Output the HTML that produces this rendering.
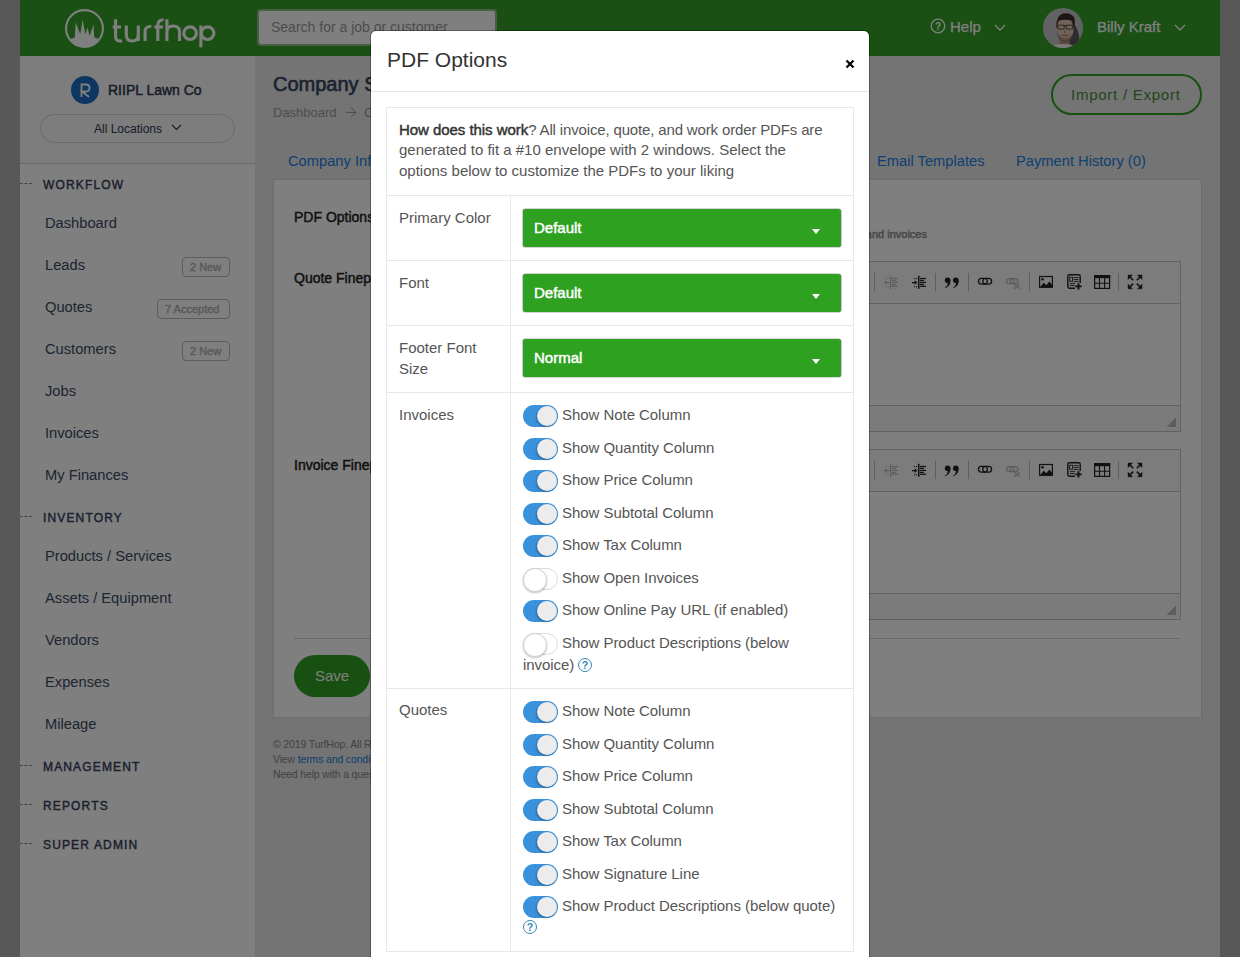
<!DOCTYPE html>
<html><head><meta charset="utf-8">
<style>
*{box-sizing:border-box;margin:0;padding:0}
html,body{width:1240px;height:957px;overflow:hidden}
body{position:relative;background:#b0b0b0;font-family:"Liberation Sans",sans-serif;color:#333}
.a{position:absolute;white-space:nowrap}
#hdr{position:absolute;left:20px;top:0;width:1200px;height:56px;background:#34a028}
#side{position:absolute;left:20px;top:56px;width:235px;height:901px;background:#fff}
#main{position:absolute;left:255px;top:56px;width:965px;height:901px;background:#e8e8e8}
.nav{position:absolute;left:25px;font-size:14.7px;color:#3b4a63}
.sec{position:absolute;left:23px;font-size:12px;letter-spacing:1.15px;color:#34405a;-webkit-text-stroke:.4px #34405a;white-space:nowrap;margin-top:1px}
.dash{position:absolute;left:0;width:12px;border-top:1px dashed #8a8a8a}
.badge{position:absolute;white-space:nowrap;right:25px;height:20px;border:1px solid #b8b8b8;border-radius:4px;font-size:11px;color:#b3b3b3;-webkit-text-stroke:.4px #b3b3b3;line-height:18px;padding:0 7px}
#ov{position:absolute;left:0;top:0;width:1240px;height:957px;background:rgba(0,0,0,.5)}
#modal{position:absolute;left:370px;top:30px;width:500px;height:940px;background:#fff;border:1px solid rgba(0,0,0,.3);border-radius:6px;background-clip:padding-box}
.tb{position:absolute;left:386px;width:468px;border:1px solid #e8e8e8}
.hl{position:absolute;left:387px;width:466px;height:1px;background:#e8e8e8}
.vl{position:absolute;left:510px;width:1px;background:#e8e8e8}
.mt{position:absolute;font-size:15px;letter-spacing:0;color:#555;white-space:nowrap}
.sel{position:absolute;left:523px;width:318px;height:38px;background:#2ea121;border-radius:2.5px;box-shadow:0 0 0 .6px rgba(80,60,80,.45)}
.sel span{position:absolute;left:11px;top:10px;font-size:15px;color:#fff;-webkit-text-stroke:.45px #fff}
.sel i{position:absolute;right:21px;top:20px;width:0;height:0;border-left:4px solid transparent;border-right:4px solid transparent;border-top:5px solid #fff}
.tg{position:absolute;left:523px;width:35px;height:22px;border-radius:11px;background:#3a92dc}
.tg:after{content:"";position:absolute;right:1px;top:1px;width:20px;height:20px;border-radius:50%;background:#ececec;box-shadow:-1px 1px 2px rgba(0,0,0,.3)}
.tg.off{background:#fff;border:1px solid #dcdcdc}
.tg.off:after{right:auto;left:-1px;top:-1px;width:22px;height:22px;background:#fff;border:1px solid #d2d2d2;box-shadow:0 1px 2px rgba(0,0,0,.25)}
.tl{position:absolute;left:562px;font-size:15px;letter-spacing:-.05px;color:#555;white-space:nowrap}
.q{position:absolute;width:14px;height:14px;border:1.4px solid #3588b3;border-radius:50%;color:#3588b3;font-size:10.5px;font-weight:bold;text-align:center;line-height:12px}
</style></head><body>
<!-- header -->
<div id="hdr">
  <svg class="a" style="left:42px;top:6px" width="46" height="46" viewBox="0 0 46 46">
    <circle cx="22.5" cy="22.5" r="18.4" fill="none" stroke="#fff" stroke-width="2.1"/>
    <path d="M7.5 33.2 L12.8 31.6 L13.7 16.3 Q16 23 18.3 27.9 L20.7 13.5 Q22 22 23.6 28.4 L25.5 21.2 Q26.5 26 27.6 29.8 Q30 24 31.5 18.3 L32.2 31.3 L37.5 33.2 A18.4 18.4 0 0 1 7.5 33.2Z" fill="#fff"/>
  </svg>
  <svg class="a" style="left:85px;top:0" width="140" height="56" viewBox="105 0 140 56"><g fill="none" stroke="#fff" stroke-width="3.1">
<path d="M115.6 19.2 V36.5 Q115.6 41 120 41 H122"/><path d="M112.7 27 H121"/>
<path d="M126.3 25.5 V34.5 Q126.3 41 132.3 41 Q138.3 41 138.3 34.5 V25.5 M138.3 30 V41"/>
<path d="M145.1 41 V31.5 Q145.1 26.2 151.3 26.2"/>
<path d="M157.8 41 V25.5 Q157.8 19.8 163.6 19.8"/><path d="M154.4 27 H163"/>
<path d="M166.9 19.2 V41 M166.9 32 Q166.9 26 173.2 26 Q179.5 26 179.5 32 V41"/>
<circle cx="190.1" cy="33.2" r="6.3"/>
<path d="M200.9 25.5 V47.3"/><circle cx="207.6" cy="33.2" r="6.3"/>
</g></svg>
  <div class="a" style="left:237px;top:9px;width:240px;height:37px;background:#fff;border:2px solid #8fbf8a;border-radius:4px"></div>
  <div class="a" style="left:251px;top:19px;font-size:14px;color:#999">Search for a job or customer</div>
  <svg class="a" style="left:910px;top:18px" width="16" height="16" viewBox="0 0 16 16"><circle cx="8" cy="8" r="6.8" fill="none" stroke="#fff" stroke-width="1.3"/><text x="8" y="11.8" font-size="10" font-weight="bold" text-anchor="middle" fill="#fff" font-family="Liberation Sans">?</text></svg>
  <div class="a" style="left:930px;top:18px;font-size:15px;color:#fff;-webkit-text-stroke:.25px #fff">Help</div>
  <svg class="a" style="left:974px;top:24px" width="12" height="8" viewBox="0 0 12 8"><path d="M1 1 L6 6 L11 1" fill="none" stroke="#fff" stroke-width="1.3"/></svg>
  <svg class="a" style="left:1023px;top:8px" width="40" height="40" viewBox="0 0 40 40">
    <defs><clipPath id="cav"><circle cx="20" cy="20" r="20"/></clipPath></defs>
    <g clip-path="url(#cav)">
      <rect width="40" height="40" fill="#c4c4c8"/>
      <path d="M29 14 Q38 22 36 40 H24Z" fill="#2c2c30" opacity=".7"/>
      <rect x="16.5" y="29" width="10" height="8" fill="#b89080"/>
      <path d="M6 40 Q11 35.5 21 36 Q30 35.5 33 40Z" fill="#f0f0f0"/>
      <ellipse cx="22.2" cy="21.8" rx="8.4" ry="11" fill="#e0c2b2"/>
      <path d="M13.8 23 Q14 33.5 22.2 34 Q30.6 33.5 30.8 23 Q29 30 22.2 30.5 Q15.6 30 13.8 23Z" fill="#7a5a4e" opacity=".5"/>
      <path d="M13.4 20 Q12.5 8 20 5.5 Q27 4 31 9 Q32.5 13 31.2 20 Q30.5 13.5 27 12 Q21 11.5 16 12.5 Q14.2 15 14.2 20Z" fill="#3d2c24"/>
      <path d="M14.6 17.2 H21.2 V20.8 Q17.8 21.6 14.9 20.8Z M23.2 17.2 H29.9 L29.7 20.8 Q26.6 21.6 23.4 20.8Z" fill="none" stroke="#252525" stroke-width=".75"/>
      <path d="M21.2 17.8 H23.2" stroke="#252525" stroke-width=".7"/>
      <path d="M22 22 L21.4 25 H23" fill="none" stroke="#a07868" stroke-width=".6"/>
      <path d="M18.6 27 Q22.2 28.6 25.8 27" fill="none" stroke="#7a4c40" stroke-width=".8"/>
    </g>
  </svg>
  <div class="a" style="left:1077px;top:18px;font-size:15px;color:#fff;-webkit-text-stroke:.25px #fff">Billy Kraft</div>
  <svg class="a" style="left:1154px;top:24px" width="12" height="8" viewBox="0 0 12 8"><path d="M1 1 L6 6 L11 1" fill="none" stroke="#fff" stroke-width="1.3"/></svg>
</div>

<!-- sidebar -->
<div id="side">
  <div class="a" style="left:0;top:0;width:235px;height:108px;background:#fafafa;border-bottom:1px solid #d4d4d4"></div>
  <div class="a" style="left:51px;top:20px;width:28px;height:28px;border-radius:50%;background:#1a6fc4"></div>
  <svg class="a" style="left:51px;top:20px" width="28" height="28" viewBox="0 0 28 28"><path d="M10.5 21 V8.5 H15 Q18.5 8.5 18.5 12 Q18.5 15.5 15 15.5 H11 L18 21" fill="none" stroke="#fff" stroke-width="1.8"/></svg>
  <div class="a" style="left:88px;top:26px;font-size:14px;color:#2c3850;-webkit-text-stroke:.45px #2c3850">RIIPL Lawn Co</div>
  <div class="a" style="left:20px;top:58px;width:195px;height:29px;border:1px solid #d6d6d6;border-radius:15px"></div>
  <div class="a" style="left:74px;top:66px;font-size:12px;color:#2c3850">All Locations</div>
  <svg class="a" style="left:151px;top:68px" width="11" height="7" viewBox="0 0 11 7"><path d="M1 1 L5.5 5.5 L10 1" fill="none" stroke="#2c3850" stroke-width="1.2"/></svg>

  <div class="dash" style="top:127px"></div><div class="sec" style="top:121px">WORKFLOW</div>
  <div class="nav" style="top:159px">Dashboard</div>
  <div class="nav" style="top:201px">Leads</div><div class="badge" style="top:201px;width:48px">2 New</div>
  <div class="nav" style="top:243px">Quotes</div><div class="badge" style="top:243px;width:73px">7 Accepted</div>
  <div class="nav" style="top:285px">Customers</div><div class="badge" style="top:285px;width:48px">2 New</div>
  <div class="nav" style="top:327px">Jobs</div>
  <div class="nav" style="top:369px">Invoices</div>
  <div class="nav" style="top:411px">My Finances</div>
  <div class="dash" style="top:460px"></div><div class="sec" style="top:454px">INVENTORY</div>
  <div class="nav" style="top:492px">Products / Services</div>
  <div class="nav" style="top:534px">Assets / Equipment</div>
  <div class="nav" style="top:576px">Vendors</div>
  <div class="nav" style="top:618px">Expenses</div>
  <div class="nav" style="top:660px">Mileage</div>
  <div class="dash" style="top:709px"></div><div class="sec" style="top:703px">MANAGEMENT</div>
  <div class="dash" style="top:748px"></div><div class="sec" style="top:742px">REPORTS</div>
  <div class="dash" style="top:787px"></div><div class="sec" style="top:781px">SUPER ADMIN</div>
</div>

<!-- main -->
<div id="main">
  <div class="a" style="left:18px;top:17px;font-size:20px;color:#34445f;-webkit-text-stroke:.6px #34445f">Company Settings</div>
  <div class="a" style="left:18px;top:49px;font-size:13px;color:#9a9a9a">Dashboard</div><svg class="a" style="left:90px;top:50px" width="12" height="12" viewBox="0 0 12 12"><path d="M1 6.4 H10.8 M6 1.4 L10.8 6.4 L6 11.2" fill="none" stroke="#8c8c8c" stroke-width=".9"/></svg><div class="a" style="left:109px;top:49px;font-size:13px;color:#9a9a9a">Company Settings</div>
  <div class="a" style="left:796px;top:18px;width:151px;height:41px;border:2px solid #2ea121;border-radius:21px"></div>
  <div class="a" style="left:816px;top:30px;font-size:15px;color:#3f8f36;letter-spacing:.75px">Import / Export</div>
  <div class="a" style="left:33px;top:97px;font-size:14.7px;color:#1a80e2">Company Info</div>
  <div class="a" style="left:622px;top:97px;font-size:14.7px;color:#1a80e2">Email Templates</div>
  <div class="a" style="left:761px;top:97px;font-size:14.7px;color:#1a80e2">Payment History (0)</div>
  <div class="a" style="left:18px;top:123px;width:929px;height:539px;background:#fff;border:1px solid #dadada"></div>
  <div class="a" style="left:39px;top:153px;font-size:14px;color:#222;-webkit-text-stroke:.45px #222">PDF Options</div>
  <div class="a" style="left:39px;top:214px;font-size:14px;color:#222;-webkit-text-stroke:.45px #222">Quote Fineprint</div>
  <div class="a" style="left:39px;top:401px;font-size:14px;color:#222;-webkit-text-stroke:.45px #222">Invoice Fineprint</div>
  <div class="a" style="left:272px;top:172px;font-size:11px;color:#8f8f8f;-webkit-text-stroke:.5px #8f8f8f;text-align:right;width:400px">These will be shown at the bottom of quotes and invoices</div>
  <!-- editors -->
  <div class="a" style="left:225px;top:205px;width:701px;height:171px;border:1px solid #c4c4c4;background:#fff">
    <div class="a" style="left:0;top:0;width:699px;height:42px;background:#f8f8f8;border-bottom:1px solid #c4c4c4"></div>
    <div class="a" style="left:0;top:143px;width:699px;height:26px;background:#f6f6f6;border-top:1px solid #c4c4c4"></div>
  </div>
  <div class="a" style="left:225px;top:393px;width:701px;height:171px;border:1px solid #c4c4c4;background:#fff">
    <div class="a" style="left:0;top:0;width:699px;height:42px;background:#f8f8f8;border-bottom:1px solid #c4c4c4"></div>
    <div class="a" style="left:0;top:143px;width:699px;height:26px;background:#f6f6f6;border-top:1px solid #c4c4c4"></div>
  </div>
  <div class="a" style="left:39px;top:582px;width:886px;height:1px;background:#d0d0d0"></div>
  <div class="a" style="left:39px;top:599px;width:76px;height:42px;background:#2ea121;border-radius:21px"></div>
  <div class="a" style="left:60px;top:611px;font-size:15px;color:#fff">Save</div>
  <div class="a" style="left:18px;top:681px;font-size:10.5px;color:#858585;line-height:15px;letter-spacing:-.15px">&copy; 2019 TurfHop. All Rights Reserved.<br>View <span style="color:#1a80e2">terms and conditions</span><br>Need help with a question?</div>
</div>


<svg class="a" style="left:860px;top:255px" width="330" height="380" viewBox="860 255 330 380">
<defs>
<g id="tbar">
  <g fill="#bdbdbd"><rect x="874" y="273" width="1" height="18"/><rect x="935" y="273" width="1" height="18"/><rect x="968" y="273" width="1" height="18"/><rect x="1029" y="273" width="1" height="18"/><rect x="1118" y="273" width="1" height="18"/></g>
  <g fill="#333" opacity=".3">
    <rect x="890" y="276" width="1.3" height="13"/>
    <rect x="892" y="277.9" width="6" height="1.2"/><rect x="892" y="279.8" width="4" height="1.2"/><rect x="892" y="281.8" width="6" height="1.2"/><rect x="892" y="283.8" width="4" height="1.2"/><rect x="892" y="285.7" width="6" height="1.2"/>
    <rect x="885" y="282" width="4.5" height="1.2"/><path d="M884 282.6 L886.5 280.3 V284.9Z"/>
    <rect x="885.8" y="278" width="1" height="1"/><rect x="887.8" y="278" width="1" height="1"/><rect x="885.8" y="286.2" width="1" height="1"/><rect x="887.8" y="286.2" width="1" height="1"/>
  </g>
  <g fill="#222">
    <rect x="918" y="275.8" width="1.5" height="13"/>
    <rect x="920" y="277.9" width="6" height="1.2"/><rect x="920" y="279.8" width="4" height="1.2"/><rect x="920" y="281.8" width="6" height="1.2"/><rect x="920" y="283.8" width="4" height="1.2"/><rect x="920" y="285.7" width="6" height="1.2"/>
    <rect x="912" y="282" width="4" height="1.3"/><path d="M917.3 282.6 L914.8 280.3 V284.9Z"/>
    <rect x="914" y="278" width="1.1" height="1.1"/><rect x="916" y="278" width="1.1" height="1.1"/><rect x="914" y="286.2" width="1.1" height="1.1"/><rect x="916" y="286.2" width="1.1" height="1.1"/>
  </g>
  <g fill="#222">
    <circle cx="947.6" cy="280.3" r="2.8"/><path d="M950.3 280 Q951 286 945.3 288.2 L945 287.6 Q947.8 285.6 947.9 282.9Z"/>
    <circle cx="955.8" cy="280.3" r="2.8"/><path d="M958.5 280 Q959.2 286 953.5 288.2 L953.2 287.6 Q956 285.6 956.1 282.9Z"/>
  </g>
  <g fill="none" stroke="#222" stroke-width="1.3">
    <rect x="978.5" y="278.4" width="8.8" height="5.8" rx="2.9"/><rect x="982.8" y="278.4" width="8.8" height="5.8" rx="2.9"/>
  </g>
  <g opacity=".3">
    <rect x="1006.6" y="278.6" width="7.5" height="5" rx="2.5" fill="none" stroke="#333" stroke-width="1.3"/><rect x="1010.4" y="278.6" width="7.5" height="5" rx="2.5" fill="none" stroke="#333" stroke-width="1.3"/>
    <path d="M1014.3 284.3 L1019.5 288.6 M1019.5 284.3 L1014.3 288.6" stroke="#333" stroke-width="1.4"/>
  </g>
  <g fill="#222">
    <rect x="1039.6" y="276.5" width="12.8" height="10.8" fill="none" stroke="#222" stroke-width="1.2"/>
    <circle cx="1042.6" cy="279.3" r="1.2"/>
    <path d="M1040 287.3 L1043.8 282.8 L1046.3 285.2 L1049.3 281.6 L1052.2 285 V287.3Z"/>
  </g>
  <g>
    <rect x="1067.8" y="274.8" width="12.4" height="13.4" rx="1.6" fill="none" stroke="#222" stroke-width="1.4"/>
    <rect x="1069.7" y="277.2" width="2.8" height="4" fill="none" stroke="#222" stroke-width=".9"/>
    <g fill="#222"><rect x="1073.6" y="277.2" width="5" height=".9"/><rect x="1073.6" y="279.2" width="5" height=".9"/><rect x="1073.6" y="281.2" width="5" height=".9"/><rect x="1069.7" y="283.2" width="6" height=".9"/><rect x="1069.7" y="285.2" width="5" height=".9"/></g>
    <rect x="1075" y="283" width="7.5" height="7" fill="#f8f8f8"/>
    <path d="M1078.5 283.2 V289.6 M1075.3 286.4 H1081.7" stroke="#222" stroke-width="1.9"/>
  </g>
  <g>
    <rect x="1094.6" y="275.6" width="15" height="12.8" fill="none" stroke="#222" stroke-width="1.2"/>
    <rect x="1094" y="275" width="16.2" height="3.2" fill="#222"/>
    <path d="M1099.5 278 V288.5 M1104.6 278 V288.5 M1094.6 283.3 H1109.6" stroke="#222" stroke-width="1.1"/>
  </g>
  <g fill="#222" stroke="#222">
    <path d="M1128 275 H1132.6 L1128 279.6Z M1142 275 H1137.4 L1142 279.6Z M1128 288.8 H1132.6 L1128 284.2Z M1142 288.8 H1137.4 L1142 284.2Z" stroke-width=".4"/>
    <path d="M1129 276 L1133.2 280.2 M1141 276 L1136.8 280.2 M1129 287.8 L1133.2 283.6 M1141 287.8 L1136.8 283.6" stroke-width="1.6" fill="none"/>
  </g>
  <path d="M1166.5 427 L1176 417.5 V427Z" fill="#bbb"/>
</g>
</defs>
<use href="#tbar"/>
<use href="#tbar" transform="translate(0,188)"/>
</svg>
<div id="ov"></div>

<!-- modal -->
<div id="modal"></div>
<div class="a" style="left:387px;top:48px;font-size:21px;color:#333">PDF Options</div>
<svg class="a" style="left:845px;top:59px" width="10" height="10" viewBox="0 0 10 10"><path d="M1.5 1.5 L8.5 8.5 M8.5 1.5 L1.5 8.5" stroke="#000" stroke-width="2.2"/></svg>
<div class="a" style="left:371px;top:91px;width:498px;height:1px;background:#e5e5e5"></div>

<div class="tb" style="top:107px;height:845px"></div>
<div class="hl" style="top:195px"></div>
<div class="hl" style="top:260px"></div>
<div class="hl" style="top:325px"></div>
<div class="hl" style="top:392px"></div>
<div class="hl" style="top:688px"></div>
<div class="vl" style="top:196px;height:755px"></div>

<div class="mt" style="left:399px;top:119.5px;line-height:20.7px"><span style="letter-spacing:-.15px"><b style="color:#333;font-size:15px;font-weight:normal;letter-spacing:-.05px;-webkit-text-stroke:.45px #333">How does this work</b>? All invoice, quote, and work order PDFs are</span><br>generated to fit a #10 envelope with 2 windows. Select the<br>options below to customize the PDFs to your liking</div>

<div class="mt" style="left:399px;top:207px;line-height:21px">Primary Color</div>
<div class="sel" style="top:209px"><span>Default</span><i></i></div>
<div class="mt" style="left:399px;top:272px;line-height:21px">Font</div>
<div class="sel" style="top:274px"><span>Default</span><i></i></div>
<div class="mt" style="left:399px;top:337px;line-height:21px">Footer Font<br>Size</div>
<div class="sel" style="top:339px"><span>Normal</span><i></i></div>

<div class="mt" style="left:399px;top:404px;line-height:21px">Invoices</div>
<div class="tg" style="top:405px"></div><div class="tl" style="top:406px">Show Note Column</div>
<div class="tg" style="top:437.5px"></div><div class="tl" style="top:438.5px">Show Quantity Column</div>
<div class="tg" style="top:470px"></div><div class="tl" style="top:471px">Show Price Column</div>
<div class="tg" style="top:502.5px"></div><div class="tl" style="top:503.5px">Show Subtotal Column</div>
<div class="tg" style="top:535px"></div><div class="tl" style="top:536px">Show Tax Column</div>
<div class="tg off" style="top:567.5px"></div><div class="tl" style="top:568.5px">Show Open Invoices</div>
<div class="tg" style="top:600px"></div><div class="tl" style="top:601px">Show Online Pay URL (if enabled)</div>
<div class="tg off" style="top:632.5px"></div><div class="tl" style="top:633.5px">Show Product Descriptions (below</div>
<div class="tl" style="left:523px;top:656px">invoice)</div><div class="q" style="left:578px;top:658px">?</div>

<div class="mt" style="left:399px;top:699px;line-height:21px">Quotes</div>
<div class="tg" style="top:701px"></div><div class="tl" style="top:702px">Show Note Column</div>
<div class="tg" style="top:733.5px"></div><div class="tl" style="top:734.5px">Show Quantity Column</div>
<div class="tg" style="top:766px"></div><div class="tl" style="top:767px">Show Price Column</div>
<div class="tg" style="top:798.5px"></div><div class="tl" style="top:799.5px">Show Subtotal Column</div>
<div class="tg" style="top:831px"></div><div class="tl" style="top:832px">Show Tax Column</div>
<div class="tg" style="top:863.5px"></div><div class="tl" style="top:864.5px">Show Signature Line</div>
<div class="tg" style="top:896px"></div><div class="tl" style="top:897px">Show Product Descriptions (below quote)</div>
<div class="q" style="left:523px;top:920px">?</div>
</body></html>
